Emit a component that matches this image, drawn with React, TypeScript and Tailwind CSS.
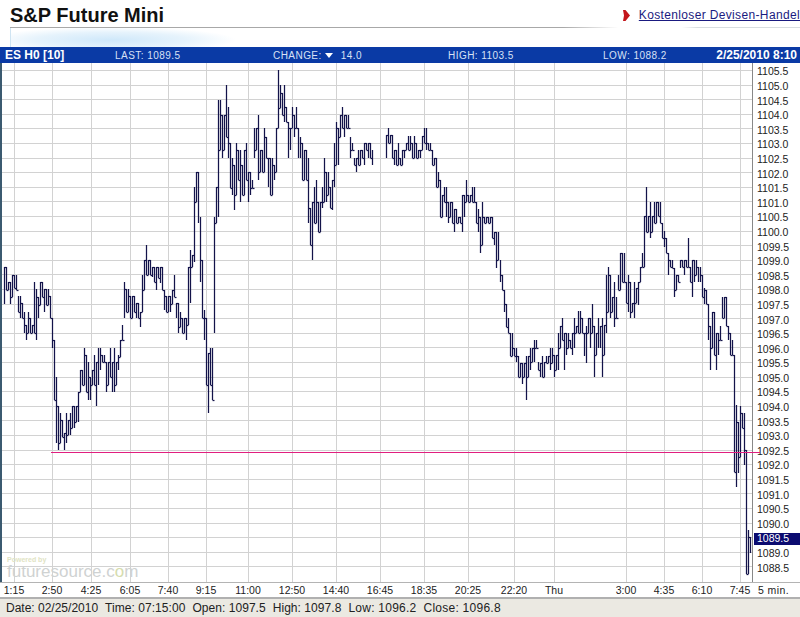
const bars: [number, string][] = [
  [4, "267-304 267-290 282-290 282-304 275-297 275-288 275-290 296-312 296-318 303-318 312-333 325-340 312-333 318-333 325-333 282-333 289-340 297-318 282-305 282-297 289-312 289-305 289-305 296-318 318-348 340-400 377-443 406-450 413-443 420-437 433-450 413-443 420-435 413-435 406-428 406-428 406-422 392-422 370-392 370-385 348-385 355-392 362-400 377-400 370-385 355-385 362-406 348-385"],
  [100, "348-370 355-362 355-362 362-392 362-385 348-377 362-392 348-392 362-385 355-370 340-357 325-340 282-318 289-312 289-312 296-318 296-318 296-312 303-318 303-318 312-327 275-312 260-290 245-275 260-275 260-275 267-277 267-282 267-290 267-278 267-283 267-290 290-310 296-312 296-312 296-312 290-304 275-297 303-318 303-333 312-327 318-333 318-333 318-340 267-325 250-303 255-267 187-262 172-202 172-223"],
  [200, "217-282 260-318 310-340 318-385 353-413 348-385 348-400 217-333 187-223 100-217 100-150 115-158 115-150 85-137 107-158 143-188 158-195 165-210 143-195 150-180 150-202 165-195 150-195 143-180 172-202 172-195 180-188 128-158 128-150 115-180 150-172 150-172 128-172 137-158 158-187 158-195 158-195 165-180 128-172 70-128 85-108 93-115 85-122 107-122 122-158 128-150 107-128 115-137 107-128 128-158"],
  [300, "137-158 143-180 150-180 150-180 158-223 208-245 202-260 187-223 180-223 202-232 202-232 187-208 158-202 172-202 172-195 187-208 180-210 143-187 122-165 128-165 115-137 107-128 115-137 115-128 115-128 137-158 143-150 158-165 158-172 150-165 150-165 150-158 143-165 143-150 143-158 143-158 150-165"],
  [386, "135-158 128-143 135-143 135-158 150-165 150-165 143-165 158-165 150-165 150-158 143-150 136-150 136-150 143-158 136-158 143-158 150-158 150-158 136-150 128-143 128-150 143-150 143-150 150-165 158-165 158-187 172-187 180-217 195-217 187-202 187-217 202-223 202-217 202-223 209-232 209-223 217-223 217-223 195-232 195-217 180-202 195-202 195-202 187-202 187-202 202-223 209-232 217-253 202-245 217-223 217-223 217-223 217-223 217-238 232-245 232-268 232-260"],
  [500, "260-282 275-290 290-312 304-327 318-333 333-356 333-356 348-356 348-362 356-377 363-377 363-384 363-377 356-400 356-377 348-370 348-362 340-362 340-348 362-370 363-377 356-377 362-377 356-363 356-363 348-370 348-363 355-377 355-370 333-370 326-348 318-340 333-370 333-355 333-348 340-348 333-355 318-348 326-333 311-333 311-333 318-333 333-356 326-363 318-333 318-348 304-333 326-377 333-355 318-348"],
  [600, "326-348 318-377 325-355 275-333 267-312 275-318 297-312 282-327 297-318 275-290 253-290 253-282 253-282 282-303 275-312 282-318 303-312 282-318 288-303 282-305 267-282 253-267 216-267 187-232 216-232 202-238 216-232 202-223 202-223 202-216 202-223 223-238 231-247 238-253 253-275 260-267 260-268 268-297 275-290 275-282 260-268 260-267 260-275 260-267 238-267 267-282 260-297 260-282 260-275 267-282"],
  [700, "267-282 275-297 288-304 290-304 304-340 326-370 312-348 312-355 333-370 333-355 326-340 297-318 297-318 297-326 326-340 333-355 340-355 355-472 405-487 422-473 406-457 413-428 413-465 450-574 530-574 537-553"],
];

const vGrid = [14, 52, 91, 130, 168, 206, 248, 292, 336, 380, 424, 468, 514, 554, 626, 664, 702, 740];
const hGrid = Array.from({ length: 35 }, (_, i) => Math.round(70 + i * 14.6));
const prices = Array.from({ length: 35 }, (_, i) => (1105.5 - i * 0.5).toFixed(1));

const times = [
  { label: "1:15", w: "w-[28px]" },
  { label: "2:50", w: "w-[48px]" },
  { label: "4:25", w: "w-[30px]" },
  { label: "6:05", w: "w-[48px]" },
  { label: "7:40", w: "w-[28px]" },
  { label: "9:15", w: "w-[48px]" },
  { label: "11:00", w: "w-[36px]" },
  { label: "12:50", w: "w-[52px]" },
  { label: "14:40", w: "w-[36px]" },
  { label: "16:45", w: "w-[52px]" },
  { label: "18:35", w: "w-[36px]" },
  { label: "20:25", w: "w-[52px]" },
  { label: "22:20", w: "w-[40px]" },
  { label: "Thu", w: "w-[40px]" },
  { label: "", w: "w-[32px]" },
  { label: "3:00", w: "w-[40px]" },
  { label: "4:35", w: "w-[36px]" },
  { label: "6:10", w: "w-[40px]" },
  { label: "7:45", w: "w-[36px]" },
];

function PriceBars() {
  return (
    <>
      {bars.map(([start, data]) => {
        const rows = data.split(" ").map((r) => r.split("-").map(Number));
        return rows.map(([hi, lo], i) => {
          const x = start + i * 2 + 0.5;
          const next = rows[i + 1];
          let tick = lo;
          if (next) {
            const top = Math.max(hi, next[0]);
            const bottom = Math.min(lo, next[1]);
            if (top <= bottom) tick = i % 2 ? bottom : top;
          }
          return (
            <g key={x}>
              <line x1={x} x2={x} y1={hi} y2={lo} />
              {next && <line x1={x} x2={x + 2} y1={tick + 0.5} y2={tick + 0.5} />}
            </g>
          );
        });
      })}
    </>
  );
}

function Chart() {
  return (
    <div className="relative w-[752px] border-l-2 border-[#3b5a70] bg-white">
      <svg width="750" height="519" viewBox="2 63 750 519" className="block overflow-visible">
        <g stroke="#d2d2d2" strokeWidth="1" shapeRendering="crispEdges">
          {vGrid.map((x) => (
            <line key={x} x1={x + 0.5} x2={x + 0.5} y1="63" y2="582" />
          ))}
          {hGrid.map((y) => (
            <line key={y} x1="2" x2="752" y1={y + 0.5} y2={y + 0.5} />
          ))}
        </g>
        <g stroke="#13134a" strokeWidth="1.25">
          <PriceBars />
        </g>
        <line x1="51" x2="760" y1="452.5" y2="452.5" stroke="#e01f7f" strokeWidth="1" shapeRendering="crispEdges" />
      </svg>
      <div className="absolute left-[5px] top-[493px] leading-none">
        <div className="text-[7px] font-bold text-[#dfe3c4]">Powered by</div>
        <div className="text-[17px] text-[#cfd2d2]">
          futuresource.c<span className="text-[#d5dcae]">o</span>m
        </div>
      </div>
    </div>
  );
}

export default function App() {
  return (
    <div className="flex h-[617px] w-[800px] flex-col overflow-hidden bg-white font-['Liberation_Sans',Arial,sans-serif]">
      <div className="flex h-[27px] items-center justify-between pt-[3px] pl-[10px]">
        <h1 className="text-[20px] leading-none font-bold text-[#111]">S&amp;P Future Mini</h1>
        <div className="flex items-center gap-[9px]">
          <svg width="7" height="11" viewBox="0 0 7 11">
            <path d="M0 0 L2.5 0 L7 5.5 L2.5 11 L0 11 L1 5.5 Z" fill="#c4161c" />
          </svg>
          <a className="text-[12px] tracking-[0.35px] whitespace-nowrap text-[#1a1a80] underline">
            Kostenloser Devisen-Handel
          </a>
        </div>
      </div>

      <div className="flex h-[20px] flex-col pl-[10px]">
        <div className="h-[1px] bg-[linear-gradient(to_right,#a8a8a8_0%,#a8a8a8_70%,#ffffff_77%,#ffffff_85%,#d8dde0_87%,#d8dde0_100%)]" />
        <div className="flex-1 border-l border-[#cfe4f2] bg-[radial-gradient(ellipse_125px_13px_at_100px_12px,#cfe8fa_0%,#e6f3fc_60%,#ffffff_100%)]" />
      </div>

      <div className="flex h-[16px] items-center bg-[#0a3aa5] pr-[3px] pl-[5px] text-[10px] tracking-[0.45px] text-[#d8e1f5]">
        <span className="w-[110px] text-[12px] font-bold tracking-normal text-white">ES H0 [10]</span>
        <span className="w-[158px]">LAST: 1089.5</span>
        <span className="flex w-[175px] items-center">
          CHANGE:
          <svg width="8" height="5" viewBox="0 0 8 5" className="mr-[8px] ml-[3px]">
            <path d="M0 0 L8 0 L4 5 Z" fill="#ffffff" />
          </svg>
          14.0
        </span>
        <span className="w-[155px]">HIGH: 1103.5</span>
        <span>LOW: 1088.2</span>
        <span className="ml-auto text-[12px] font-bold tracking-normal text-white">2/25/2010 8:10</span>
      </div>

      <div className="flex h-[519px]">
        <Chart />
        <div className="flex-1 border-l border-[#888] pt-[2px] text-[10.5px] text-[#222]">
          {prices.map((p) => (
            <div key={p} className="flex h-[14.6px] items-center">
              {p === "1089.5" ? (
                <span className="ml-[1px] flex h-[12px] flex-1 items-center bg-[#0b0b70] pl-[3px] text-white">{p}</span>
              ) : (
                <span className="pl-[4px]">{p}</span>
              )}
            </div>
          ))}
        </div>
      </div>

      <div className="flex h-[15px] items-center border-t border-[#b4b4b4] pt-[1px] text-[10.5px] text-[#222]">
        {times.map((t, i) => (
          <span key={i} className={`${t.w} flex justify-center whitespace-nowrap`}>
            {t.label}
          </span>
        ))}
        <span className="ml-[-1px] pl-[1px] tracking-[0.4px]">5 min.</span>
      </div>

      <div className="flex h-[20px] items-center gap-[7px] border-t-2 border-[#b0b0b0] bg-[#ebe9e2] pl-[6px] text-[12px] text-[#222]">
        <span>Date: 02/25/2010</span>
        <span className="tracking-[0.05px]">Time: 07:15:00</span>
        <span className="tracking-[0.05px]">Open: 1097.5</span>
        <span className="tracking-[0.05px]">High: 1097.8</span>
        <span className="tracking-[0.25px]">Low: 1096.2</span>
        <span className="tracking-[0.25px]">Close: 1096.8</span>
      </div>
    </div>
  );
}
